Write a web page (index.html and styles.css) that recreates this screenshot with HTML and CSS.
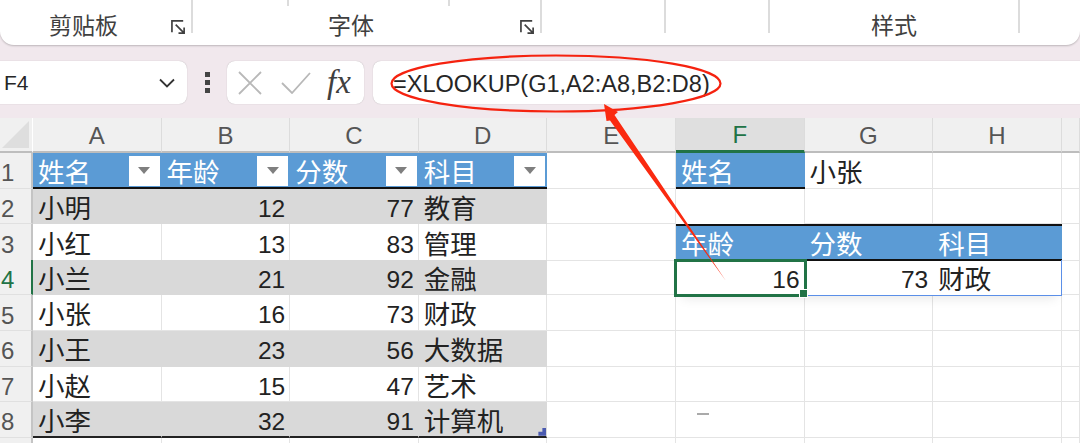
FILE: index.html
```html
<!DOCTYPE html>
<html lang="zh-CN">
<head>
    <meta charset="UTF-8">
    <title>XLOOKUP</title>
    <link rel="stylesheet" href="styles.css">
</head>
<body>
    <!-- ribbon -->
    <div class="ribbon">
        <div class="group group-clipboard">
            <span class="group-label">剪贴板</span>
            <svg class="launcher" viewBox="0 0 16 16"><path d="M1 13V1h12M5 5l9 9M14 8v6H8" /></svg>
        </div>
        <div class="group group-font">
            <i class="tick tick-a"></i>
            <i class="tick tick-b"></i>
            <span class="group-label">字体</span>
            <svg class="launcher" viewBox="0 0 16 16"><path d="M1 13V1h12M5 5l9 9M14 8v6H8" /></svg>
        </div>
        <div class="group group-align"></div>
        <div class="group group-number"></div>
        <div class="group group-style"><span class="group-label">样式</span></div>
    </div>

    <!-- formula bar -->
    <div class="formula-bar">
        <div class="name-box">
            <span>F4</span>
            <svg class="chevron" viewBox="0 0 16 10"><path d="M1 1.5l7 7 7-7" /></svg>
        </div>
        <div class="dots"><i></i><i></i><i></i></div>
        <div class="fx-box">
            <svg class="fx-cancel" viewBox="0 0 24 24"><path d="M1 1l22 22M23 1L1 23" /></svg>
            <svg class="fx-enter" viewBox="0 0 30 22"><path d="M1 11l10 10L29 1" /></svg>
            <span class="fx-label">fx</span>
        </div>
        <div class="formula-input">=XLOOKUP(G1,A2:A8,B2:D8)</div>
    </div>

    <!-- sheet -->
    <div class="sheet">
        <div class="row row-head">
            <div class="corner"><i></i></div>
            <div class="col-head">A</div><div class="col-head">B</div><div class="col-head">C</div><div class="col-head">D</div>
            <div class="col-head">E</div><div class="col-head col-active">F</div><div class="col-head">G</div><div class="col-head">H</div><div class="col-head"></div>
        </div>
        <div class="row">
            <div class="row-num">1</div>
            <div class="cell head">姓名<span class="filter"></span></div>
            <div class="cell head">年龄<span class="filter"></span></div>
            <div class="cell head">分数<span class="filter"></span></div>
            <div class="cell head">科目<span class="filter"></span></div>
            <div class="cell"></div>
            <div class="cell head">姓名</div>
            <div class="cell">小张</div>
            <div class="cell"></div><div class="cell"></div>
        </div>
        <div class="row">
            <div class="row-num">2</div>
            <div class="cell band">小明</div><div class="cell band num">12</div><div class="cell band num">77</div><div class="cell band">教育</div>
            <div class="cell"></div>
            <div class="cell above-head"></div><div class="cell"></div><div class="cell"></div><div class="cell"></div>
        </div>
        <div class="row">
            <div class="row-num">3</div>
            <div class="cell">小红</div><div class="cell num">13</div><div class="cell num">83</div><div class="cell">管理</div>
            <div class="cell"></div>
            <div class="cell head head-top">年龄</div><div class="cell head head-top">分数</div><div class="cell head head-top">科目</div>
            <div class="cell"></div>
        </div>
        <div class="row">
            <div class="row-num row-active">4</div>
            <div class="cell band">小兰</div><div class="cell band num">21</div><div class="cell band num">92</div><div class="cell band">金融</div>
            <div class="cell"></div>
            <div class="cell num clear">16</div><div class="cell num clear">73</div><div class="cell clear">财政</div>
            <div class="cell"></div>
        </div>
        <div class="row">
            <div class="row-num">5</div>
            <div class="cell">小张</div><div class="cell num">16</div><div class="cell num">73</div><div class="cell">财政</div>
            <div class="cell"></div><div class="cell"></div><div class="cell"></div><div class="cell"></div><div class="cell"></div>
        </div>
        <div class="row">
            <div class="row-num">6</div>
            <div class="cell band">小王</div><div class="cell band num">23</div><div class="cell band num">56</div><div class="cell band">大数据</div>
            <div class="cell"></div><div class="cell"></div><div class="cell"></div><div class="cell"></div><div class="cell"></div>
        </div>
        <div class="row">
            <div class="row-num">7</div>
            <div class="cell">小赵</div><div class="cell num">15</div><div class="cell num">47</div><div class="cell">艺术</div>
            <div class="cell"></div><div class="cell"></div><div class="cell"></div><div class="cell"></div><div class="cell"></div>
        </div>
        <div class="row">
            <div class="row-num">8</div>
            <div class="cell band last">小李</div><div class="cell band last num">32</div><div class="cell band last num">91</div><div class="cell band last">计算机<i class="resize"></i></div>
            <div class="cell"></div><div class="cell"></div><div class="cell"></div><div class="cell"></div><div class="cell"></div>
        </div>
        <div class="row">
            <div class="row-num"></div>
            <div class="cell"></div><div class="cell"></div><div class="cell"></div><div class="cell"></div>
            <div class="cell"></div><div class="cell"></div><div class="cell"></div><div class="cell"></div><div class="cell"></div>
        </div>

        <div class="spill"></div>
        <div class="selection"><i class="handle"></i></div>
        <i class="smudge"></i>
    </div>

    <!-- red annotation -->
    <svg class="annotation" viewBox="0 0 1080 443">
        <ellipse cx="556" cy="83.5" rx="164.5" ry="28" fill="none" stroke="#f5220f" stroke-width="2.2" />
        <polygon points="604,104 618,112 614.5,115 726,281 610,120.5 606.5,121" fill="#fa2a10" />
    </svg>
</body>
</html>
```

FILE: styles.css
```css
* {
    box-sizing: border-box;
}

html, body {
    height: 100%;
}

body {
    margin: 0;
    overflow: hidden;
    position: relative;
    background-color: #f1e8ed;
    color: #262626;
    font-family: "Liberation Sans", "Noto Sans CJK SC", sans-serif;
}

/* ribbon */
.ribbon {
    display: flex;
    height: 45px;
    background-color: #fff;
    border-radius: 0 0 14px 14px;
    box-shadow: 0 1px 2px rgba(0, 0, 0, 0.22);
}

.group {
    position: relative;
    display: flex;
    justify-content: center;
    height: 33px;
    border-right: 2px solid #dcdcdc;
}

.group-clipboard { width: 193px; padding-right: 24px; }
.group-font { width: 349px; padding-right: 31px; }
.group-align { width: 124px; }
.group-number { width: 104px; }
.group-style { width: 250px; }

.group-label {
    margin-top: 11px;
    font-size: 23px;
    line-height: 30px;
    color: #404040;
    white-space: nowrap;
}

.launcher {
    position: absolute;
    right: 5px;
    top: 20px;
    width: 15px;
    height: 15px;
    fill: none;
    stroke: #404040;
    stroke-width: 1.8;
}

.tick {
    position: absolute;
    top: 0;
    width: 2px;
    height: 6px;
    background-color: #dcdcdc;
}

.tick-a { left: 94px; }
.tick-b { left: 255px; }

/* formula bar */
.formula-bar {
    display: flex;
    align-items: stretch;
    height: 43px;
    margin-top: 16px;
}

.name-box {
    display: flex;
    align-items: center;
    justify-content: space-between;
    width: 187px;
    padding: 0 12px 0 4px;
    background-color: #fff;
    border-radius: 0 8px 8px 0;
    box-shadow: 0 0 1px rgba(0, 0, 0, 0.3);
    font-size: 21px;
}

.chevron {
    width: 16px;
    height: 10px;
    fill: none;
    stroke: #333;
    stroke-width: 1.8;
}

.dots {
    display: flex;
    flex-direction: column;
    justify-content: center;
    gap: 3px;
    width: 40px;
    padding-left: 18px;
}

.dots i {
    width: 5px;
    height: 5px;
    background-color: #444;
}

.fx-box {
    display: flex;
    align-items: center;
    width: 137px;
    padding-left: 11px;
    background-color: #fff;
    border-radius: 8px;
    box-shadow: 0 0 1px rgba(0, 0, 0, 0.3);
}

.fx-cancel {
    width: 24px;
    height: 24px;
    fill: none;
    stroke: #b8b8b8;
    stroke-width: 1.8;
}

.fx-enter {
    width: 30px;
    height: 22px;
    margin-left: 19px;
    fill: none;
    stroke: #b8b8b8;
    stroke-width: 1.8;
}

.fx-label {
    margin-left: 16px;
    font-family: "Liberation Serif", serif;
    font-style: italic;
    font-size: 33px;
    line-height: 1;
    color: #404040;
}

.formula-input {
    flex: 1;
    margin-left: 9px;
    padding-left: 20px;
    background-color: #fff;
    border-radius: 8px 0 0 8px;
    box-shadow: 0 0 1px rgba(0, 0, 0, 0.3);
    font-size: 23.5px;
    line-height: 46px;
    white-space: nowrap;
}

/* sheet */
.sheet {
    position: relative;
    margin-top: 14px;
    height: 325px;
    overflow: hidden;
    background-color: #fff;
}

.row {
    display: grid;
    grid-template-columns: 33px repeat(8, 128.6px) 1fr;
    height: 35.6px;
}

.row-head {
    height: 35px;
}

.corner, .col-head, .row-num {
    background-color: #f0f0f0;
    color: #555;
    font-size: 24px;
}

.corner {
    position: relative;
    border-bottom: 2px solid #bdbdbd;
    border-right: 1px solid #fff;
}

.corner i {
    position: absolute;
    left: 2px;
    top: 3px;
    width: 27px;
    height: 27px;
    background-color: #dedede;
    clip-path: polygon(100% 0, 100% 100%, 0 100%);
}

.col-head {
    display: flex;
    align-items: center;
    justify-content: center;
    padding-top: 2px;
    border-right: 1px solid #dcdcdc;
    border-bottom: 2px solid #bdbdbd;
}

.col-active {
    background-color: #dfdfdf;
    color: #217346;
    border-bottom: 3px solid #217346;
}

.row-num {
    display: flex;
    align-items: center;
    padding: 6px 0 0 1px;
    border-right: 2px solid #c4c4c4;
    border-bottom: 1px solid #e0e0e0;
}

.row-active {
    color: #217346;
    border-right: 2px solid #217346;
}

.cell {
    display: flex;
    align-items: center;
    justify-content: space-between;
    min-width: 0;
    padding: 6px 5px 0;
    border-right: 1px solid #e4e4e4;
    border-bottom: 1px solid #e4e4e4;
    font-size: 26.5px;
    line-height: 1;
    white-space: nowrap;
    color: #222;
}

.num {
    justify-content: flex-end;
    font-size: 24.5px;
    padding-right: 4px;
}

.band {
    position: relative;
    background-color: #d9d9d9;
    border-color: #d9d9d9;
}

.head {
    padding-right: 2px;
    background-color: #5b9bd5;
    border-right: none;
    border-bottom: 2px solid #111;
    color: #fff;
}

.head-top {
    border-top: 2px solid #111;
}

.above-head {
    border-bottom: none;
}

.last {
    border-bottom: 2px solid #222;
}

.clear {
    border-right-color: transparent;
    border-bottom-color: transparent;
}

.filter {
    display: flex;
    align-items: center;
    justify-content: center;
    width: 31px;
    height: 30px;
    margin-top: -4px;
    background-color: #fff;
}

.filter::after {
    content: "";
    border-top: 7px solid #7f7f7f;
    border-left: 6.5px solid transparent;
    border-right: 6.5px solid transparent;
}

.resize {
    position: absolute;
    right: 0;
    bottom: 0;
    width: 8px;
    height: 8px;
    background-color: #4a5ab0;
    clip-path: polygon(100% 0, 100% 100%, 0 100%, 0 50%, 50% 50%, 50% 0);
}

.spill {
    position: absolute;
    left: 676px;
    top: 142px;
    width: 386px;
    height: 36px;
    border: 1px solid #5b8fe8;
    border-top: none;
    box-shadow: 0 8px 12px -6px rgba(0, 0, 0, 0.1);
}

.selection {
    position: absolute;
    left: 674px;
    top: 141px;
    width: 133px;
    height: 38px;
    border: 3px solid #217346;
}

.handle {
    position: absolute;
    right: -4px;
    bottom: -4px;
    width: 9px;
    height: 9px;
    background-color: #217346;
    border: 1px solid #fff;
}

.smudge {
    position: absolute;
    left: 697px;
    top: 295px;
    width: 12px;
    height: 2px;
    background-color: #aaa;
    filter: blur(0.6px);
}

/* red circle and arrow drawn over the screenshot */
.annotation {
    position: absolute;
    left: 0;
    top: 0;
    width: 1080px;
    height: 443px;
    pointer-events: none;
}
```
